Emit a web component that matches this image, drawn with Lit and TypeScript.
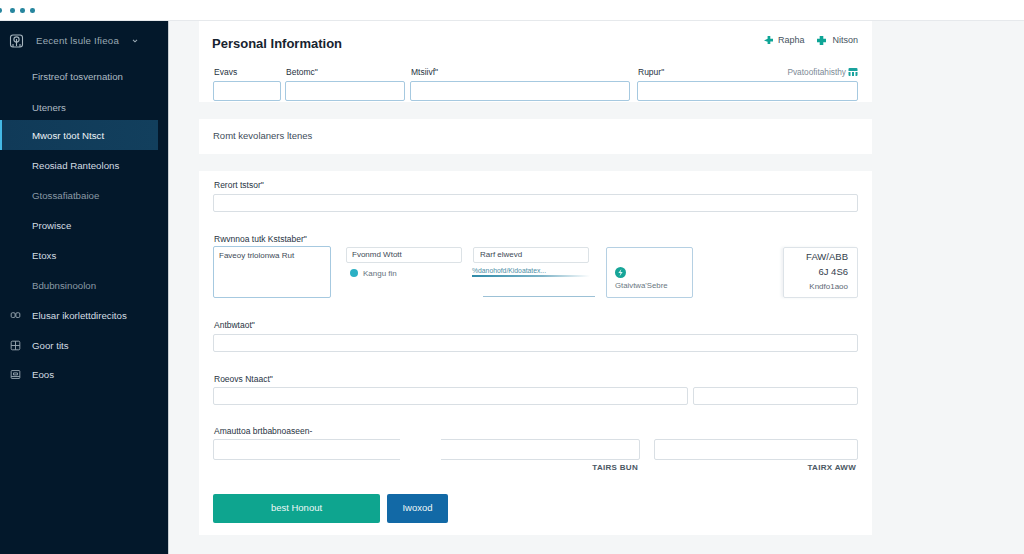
import { LitElement, html, css, svg } from "lit";
import { customElement } from "lit/decorators.js";

const NAV = [
  { t: "Firstreof tosvernation", c: "r1" },
  { t: "Uteners", c: "r2" },
  { t: "Mwosr töot Ntsct", c: "r3 active" },
  { t: "Reosiad Ranteolons", c: "r4 bright" },
  { t: "Gtossafiatbaioe", c: "r4 dim" },
  { t: "Prowisce", c: "r4 bright" },
  { t: "Etoxs", c: "r4 bright" },
  { t: "Bdubnsinoolon", c: "r4 dim" },
  { t: "Elusar ikorlettdirecitos", c: "r4 bright", i: "double" },
  { t: "Goor tits", c: "r4 bright", i: "grid" },
  { t: "Eoos", c: "r5 bright", i: "box" },
];

const ICONS: Record<string, unknown> = {
  double: svg`<rect x="1.5" y="3.5" width="5" height="6" rx="1.5"/><rect x="7.5" y="3.5" width="5" height="6" rx="1.5"/>`,
  grid: svg`<rect x="1.5" y="1.5" width="11" height="11" rx="1.5"/><path d="M1.5 7h11M7 1.500v11"/>`,
  box: svg`<rect x="1.5" y="2" width="11" height="10" rx="1"/><path d="M4.500 5h5v2.500h-5zM1.500 9.500h11"/>`,
};

@customElement("app-root")
export class AppRoot extends LitElement {
  static styles = css`
    :host { display: block; width: 1024px; height: 554px; overflow: hidden; font-family: "Liberation Sans", Arial, sans-serif; color: #33404d; background: #f4f6f7; }
    .top { height: 21px; box-sizing: border-box; padding-top: 1px; background: #fff; border-bottom: 1px solid #e6e9ec; display: flex; align-items: center; gap: 5.5px; margin-left: -3px; }
    .dot { width: 4.5px; height: 4.5px; border-radius: 50%; background: #27869f; }
    .dot.first { margin-right: 3px; }
    .body { display: flex; height: 533px; }
    .side { width: 169px; flex: none; background: #03182b; border-right: 1px solid #c9ced3; box-sizing: border-box; color: #c7d2da; font-size: 9.7px; }
    .brand { height: 40px; padding-bottom: 1px; box-sizing: border-box; display: flex; align-items: center; padding-left: 9px; color: #9aa9b4; }
    .brand svg { width: 15px; height: 16px; fill: none; stroke: #a8b6bf; stroke-width: 1.1; margin-right: 12px; }
    .brand span { width: 98px; white-space: nowrap; letter-spacing: .2px; }
    .brand .chev { width: 6px; height: 4px; margin: 0 0 0 -2px; stroke: #9aa9b4; stroke-width: 1.3; }
    .item { display: flex; align-items: center; width: 158px; box-sizing: border-box; padding-left: 32px; position: relative; white-space: nowrap; color: #aebbc4; }
    .r1 { height: 30px; }
    .r2 { height: 30px; margin-top: 1px; margin-bottom: -2px; }
    .r3 { height: 30px; }
    .r4 { height: 30px; }
    .r5 { height: 29px; }
    .active { background: linear-gradient(90deg, #103a58, #123f5d); color: #eef4f8; border-left: 2px solid #44b9e6; padding-left: 30px; }
    .bright { color: #d4dde3; }
    .dim { color: #8b9aa6; }
    .item svg { position: absolute; left: 10px; top: 50%; margin-top: -5.5px; width: 11px; height: 11px; fill: none; stroke: #98a7b1; stroke-width: 1.2; }
    .main { flex: none; width: 673px; margin-left: 30px; display: flex; flex-direction: column; gap: 17px; }
    .card { background: #fff; box-sizing: border-box; padding-left: 14px; padding-right: 14px; }
    .c1 { height: 81px; position: relative; }
    .c2 { height: 35px; padding-bottom: 2px; display: flex; align-items: center; font-size: 9.5px; color: #3e4c5a; }
    .c3 { height: 364px; padding-top: 8px; padding-bottom: 12px; display: flex; flex-direction: column; }
    .head { display: flex; align-items: center; height: 46px; }
    h1 { font-size: 13px; line-height: 16px; margin: 0 0 0 -1px; color: #17232f; font-weight: 700; flex: 1; }
    .links { display: flex; align-items: center; font-size: 9px; color: #45525e; margin-top: -8px; }
    .links svg { width: 9px; height: 9px; fill: #0ea596; margin-right: 5px; }
    .links span + svg { margin-left: 13px; margin-right: 6px; }
    .g4 { display: flex; margin-top: -1px; }
    .f1 { width: 68px; }
    .f2 { width: 120px; margin-left: 4px; }
    .f3 { width: 220px; margin-left: 5px; }
    .f4 { width: 221px; margin-left: 7px; }
    .lab { font-size: 8.5px; line-height: 12px; height: 12px; color: #27333f; white-space: nowrap; margin-left: 1px; display: flex; justify-content: space-between; align-items: center; }
    .lab .opt { color: #7c8a96; font-size: 8.3px; display: flex; align-items: center; gap: 2px; }
    .lab .opt svg { width: 10px; height: 8px; fill: #19a29d; }
    .inp { box-sizing: border-box; border-radius: 2px; background: #fff; }
    .blue { height: 20px; border: 1px solid #a6c9e0; margin-top: 3px; }
    .plain { height: 18px; border: 1px solid #d9dfe4; }
    .tall { height: 21px; }
    .m21 { margin-top: 21px; }
    .m20 { margin-top: 20px; }
    .s3 { margin-top: 3px; }
    .s1 { margin-top: 1px; }
    .s2 { margin-top: 2px; }
    .row { display: flex; height: 52px; }
    .ta { width: 118px; height: 52px; box-sizing: border-box; border: 1px solid #a6c9e0; border-radius: 2px; padding: 3px 5px; font-size: 8px; line-height: 11px; color: #3e4a56; margin-top: 0; white-space: nowrap; }
    .col { width: 116px; margin-left: 15px; padding-top: 1px; position: relative; }
    .col.b { margin-left: 11px; width: 116px; }
    .mini { height: 16px; box-sizing: border-box; border: 1px solid #dce2e6; border-radius: 2px; font-size: 8px; line-height: 14px; padding-left: 6px; color: #3e4a56; white-space: nowrap; }
    .col .mini.ctr { padding-left: 5px; }
    .cap { display: flex; align-items: center; margin-top: 5px; font-size: 8px; color: #65727d; margin-left: 4px; gap: 5px; height: 10px; white-space: nowrap; }
    .circ { width: 8px; height: 8px; border-radius: 50%; background: #2bb0c4; }
    .tiny { font-size: 6.8px; line-height: 8px; color: #4d8ea6; margin-top: 4px; margin-left: -1px; white-space: nowrap; }
    .line { position: absolute; height: 1.5px; }
    .l1 { left: -1px; width: 118px; top: 29px; background: linear-gradient(90deg, #2f8aa8, #7fb4c8 60%, #fff); }
    .l2 { left: 10px; width: 112px; top: 50px; height: 1px; background: #9cc1d6; }
    .stat { width: 87px; box-sizing: border-box; margin-left: 17px; border: 1px solid #b5d0e3; border-radius: 2px; padding: 19px 0 0 8px; margin-top: 1px; height: 51px; }
    .stat svg { display: block; width: 11px; height: 11px; }
    .stat div { font-size: 7.8px; color: #6a7781; margin-top: 3px; white-space: nowrap; }
    .sum { width: 75px; height: 51px; box-sizing: border-box; margin-left: auto; margin-top: 1px; border: 1px solid #dde3e8; border-radius: 2px; text-align: right; padding: 1px 9px 0 0; font-size: 9.5px; line-height: 15px; color: #33404c; box-shadow: -2px 0 3px #f0f2f4; }
    .sum .k { font-size: 8px; color: #5c6974; line-height: 14px; margin-top: 1px; }
    .split { display: flex; gap: 5px; }
    .split .w1 { width: 475px; }
    .split .w2 { width: 165px; }
    .rel { position: relative; display: flex; gap: 14px; }
    .rel .w3 { width: 427px; }
    .rel .w4 { width: 204px; }
    .patch { position: absolute; left: 187px; top: -1px; width: 41px; height: 34px; background: #fff; }
    .help { display: flex; height: 12px; margin-top: 2px; font-size: 8px; line-height: 12px; color: #4b5763; letter-spacing: .3px; font-weight: 700; }
    .help span { text-align: right; }
    .help .h1 { width: 425px; }
    .help .h2 { width: 218px; }
    .btns { display: flex; gap: 7px; margin-top: 20px; }
    button { height: 29px; border: none; border-radius: 2px; color: #eef8f7; font: 9.5px "Liberation Sans", Arial, sans-serif; padding: 0 0 2px; }
    .go { width: 167px; background: #0ea58f; }
    .alt { width: 61px; background: #1269a6; }
  `;

  render() {
    return html`
      <div class="top"><span class="dot first"></span><span class="dot"></span><span class="dot"></span><span class="dot"></span></div>
      <div class="body">
        <nav class="side">
          <div class="brand">
            <svg viewBox="0 0 15 16"><rect x="1.500" y="2" width="12" height="12" rx="2.500"/><circle cx="7.500" cy="6.500" r="2.600"/><path d="M7.500 6v7M4 14v-3M11 14v-3"/></svg>
            <span>Eecent lsule Ifieoa</span>
            <svg class="chev" viewBox="0 0 7 5"><path d="M1 1l2.500 2.500L6 1"/></svg>
          </div>
          ${NAV.map((n) => html`<div class="item ${n.c}">
            ${n.i ? html`<svg viewBox="0 0 14 14">${ICONS[n.i]}</svg>` : null}${n.t}
          </div>`)}
        </nav>
        <main class="main">
          <section class="card c1">
            <div class="head">
              <h1>Personal Information</h1>
              <div class="links">
                <svg viewBox="0 0 10 10"><path d="M4 0h3v3h3v3H7v3H4V6.500L0 5l4-2z"/></svg><span>Rapha</span>
                <svg viewBox="0 0 10 10"><path d="M3 0h4v3h3v4H7v3H3V7H0V3h3z"/></svg><span>Nitson</span>
              </div>
            </div>
            <div class="g4">
              <div class="f1"><div class="lab">Evavs</div><div class="inp blue"></div></div>
              <div class="f2"><div class="lab">Betomc"</div><div class="inp blue"></div></div>
              <div class="f3"><div class="lab">Mtsiivf"</div><div class="inp blue"></div></div>
              <div class="f4">
                <div class="lab">Rupur"
                  <span class="opt">Pvatoofitahisthy <svg viewBox="0 0 9 8"><path d="M0 1a1 1 0 011-1h7a1 1 0 011 1v2H0zM0 4h2v4H1a1 1 0 01-1-1zM3.500 4h2v4h-2zM7 4h2v3a1 1 0 01-1 1H7z"/></svg></span>
                </div>
                <div class="inp blue"></div>
              </div>
            </div>
          </section>
          <section class="card c2">Romt kevolaners ltenes</section>
          <section class="card c3">
            <div class="lab">Rerort tstsor"</div>
            <div class="inp plain s3"></div>

            <div class="lab m21">Rwvnnoa tutk Kststaber"</div>
            <div class="row s1">
              <div class="ta">Faveoy trlolonwa Rut</div>
              <div class="col">
                <div class="mini ctr">Fvonmd Wtott</div>
                <div class="cap"><span class="circ"></span>Kangu fin</div>
              </div>
              <div class="col b">
                <div class="mini">Rarf elwevd</div>
                <div class="tiny">%danohofd/Kidoatatex...</div>
                <span class="line l1"></span><span class="line l2"></span>
              </div>
              <div class="stat">
                <svg viewBox="0 0 10 10"><circle cx="5" cy="5" r="5" fill="#17a598"/><path d="M5.800 1.800L3 5.500h2L4.200 8.300 7 4.500H5z" fill="#dff5f2"/></svg>
                <div>Gtaivtwa'Sebre</div>
              </div>
              <div class="sum">FAW/ABB<br />6J 4S6<div class="k">Kndfo1aoo</div></div>
            </div>

            <div class="lab m21">Antbwtaot"</div>
            <div class="inp plain s3"></div>

            <div class="lab m21">Roeovs Ntaact"</div>
            <div class="split s2"><div class="inp plain w1"></div><div class="inp plain w2"></div></div>

            <div class="lab m20">Amauttoa brtbabnoaseen-</div>
            <div class="rel s2">
              <div class="inp plain tall w3"></div>
              <div class="inp plain tall w4"></div>
              <div class="patch"></div>
            </div>
            <div class="help"><span class="h1">TAIRS BUN</span><span class="h2">TAIRX AWW</span></div>

            <div class="btns"><button class="go">best Honout</button><button class="alt">Iwoxod</button></div>
          </section>
        </main>
      </div>
    `;
  }
}
